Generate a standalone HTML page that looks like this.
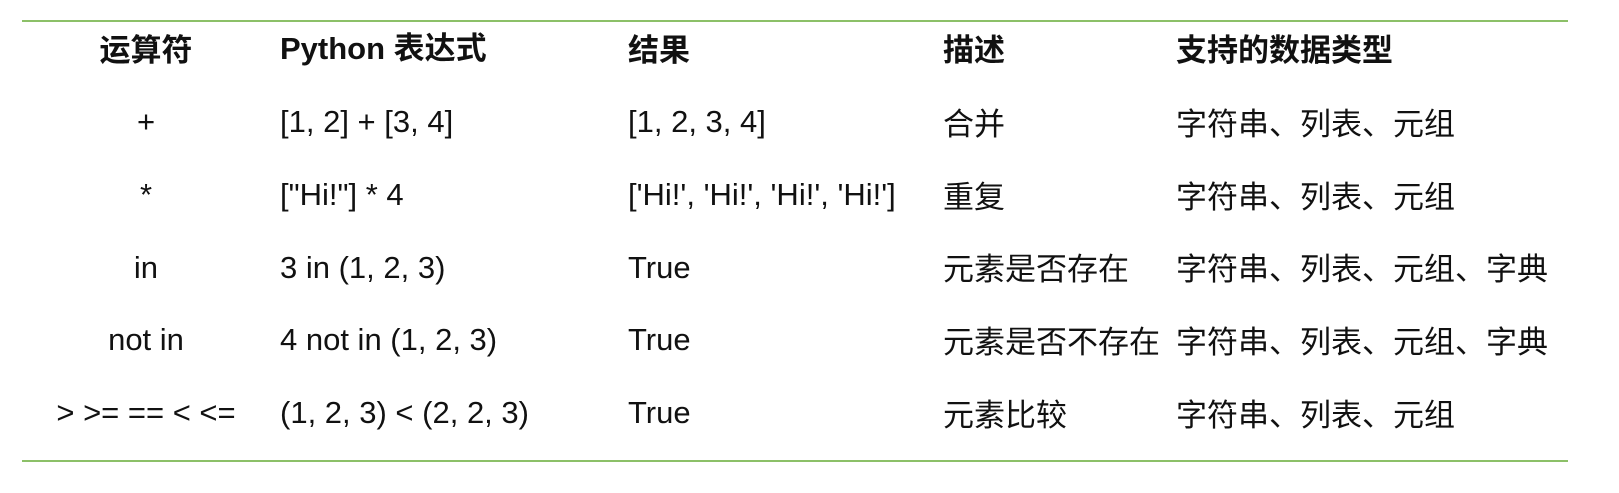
<!DOCTYPE html>
<html><head><meta charset="utf-8"><style>
body{margin:0;width:1619px;height:493px;background:#fff;position:relative;overflow:hidden;font-family:"Liberation Sans","Noto Sans CJK SC",sans-serif;font-size:31px;color:#111}
.l{position:absolute;left:22px;width:1546px;height:2px;background:#8cc068}
.t{position:absolute;white-space:nowrap;line-height:32px;transform:translateY(-16px)}
.c{width:200px;left:46px;text-align:center}
.b{font-weight:bold}
</style></head><body>
<div class="l" style="top:20px"></div>
<div class="l" style="top:460px"></div>
<div class="t b c" style="top:51px">运算符</div>
<div class="t b" style="left:280px;top:49px">Python 表达式</div>
<div class="t b" style="left:628px;top:51px">结果</div>
<div class="t b" style="left:943px;top:51px">描述</div>
<div class="t b" style="left:1176px;top:51px">支持的数据类型</div>

<div class="t c" style="top:122px">+</div>
<div class="t" style="left:280px;top:122px">[1, 2] + [3, 4]</div>
<div class="t" style="left:628px;top:122px">[1, 2, 3, 4]</div>
<div class="t" style="left:943px;top:125px">合并</div>
<div class="t" style="left:1176px;top:125px">字符串、列表、元组</div>

<div class="t c" style="top:195px">*</div>
<div class="t" style="left:280px;top:195px">["Hi!"] * 4</div>
<div class="t" style="left:628px;top:195px">['Hi!', 'Hi!', 'Hi!', 'Hi!']</div>
<div class="t" style="left:943px;top:198px">重复</div>
<div class="t" style="left:1176px;top:198px">字符串、列表、元组</div>

<div class="t c" style="top:268px">in</div>
<div class="t" style="left:280px;top:268px">3 in (1, 2, 3)</div>
<div class="t" style="left:628px;top:268px">True</div>
<div class="t" style="left:943px;top:270px">元素是否存在</div>
<div class="t" style="left:1176px;top:270px">字符串、列表、元组、字典</div>

<div class="t c" style="top:340px">not in</div>
<div class="t" style="left:280px;top:340px">4 not in (1, 2, 3)</div>
<div class="t" style="left:628px;top:340px">True</div>
<div class="t" style="left:943px;top:343px">元素是否不存在</div>
<div class="t" style="left:1176px;top:343px">字符串、列表、元组、字典</div>

<div class="t c" style="top:413px">&gt; &gt;= == &lt; &lt;=</div>
<div class="t" style="left:280px;top:413px">(1, 2, 3) &lt; (2, 2, 3)</div>
<div class="t" style="left:628px;top:413px">True</div>
<div class="t" style="left:943px;top:416px">元素比较</div>
<div class="t" style="left:1176px;top:416px">字符串、列表、元组</div>
</body></html>
